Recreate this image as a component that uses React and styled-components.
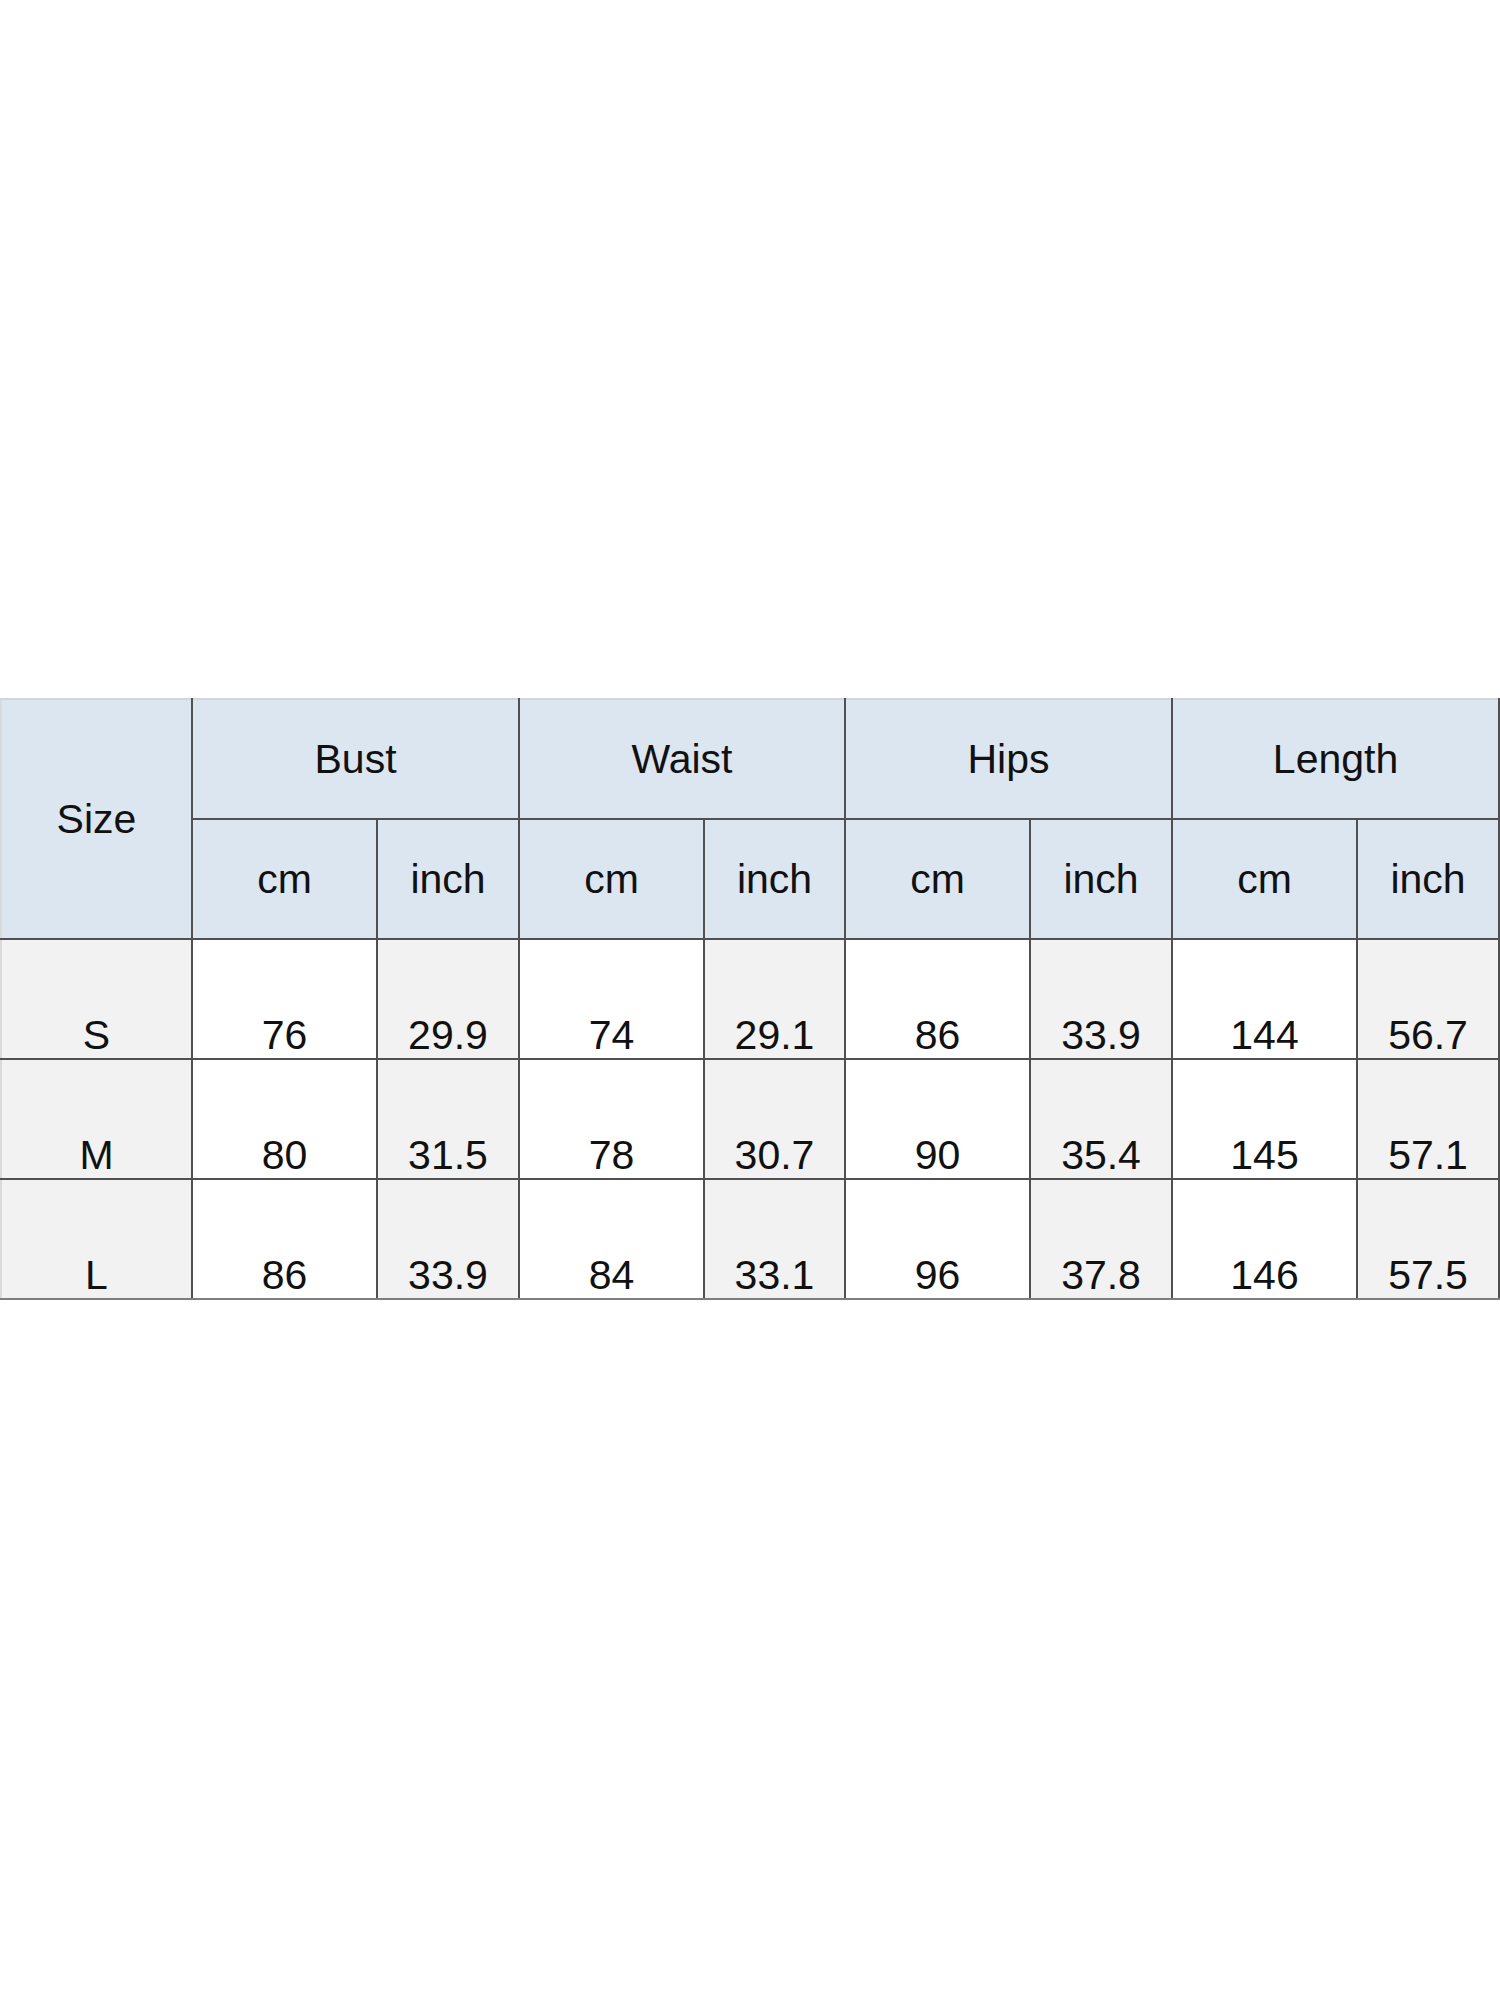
import React from "react";
import styled, { createGlobalStyle } from "styled-components";

const GlobalStyle = createGlobalStyle`
  html, body {
    margin: 0;
    padding: 0;
    background: #ffffff;
  }
  body {
    font-family: "Liberation Sans", Arial, sans-serif;
  }
`;

const Page = styled.div`
  width: 1500px;
  height: 2000px;
  padding-top: 698px;
  box-sizing: border-box;
  background: #ffffff;
`;

const Table = styled.table`
  width: 1498px;
  table-layout: fixed;
  border-collapse: collapse;
  border-top: 2px solid #d2d6da;
  border-left: 2px solid #d8dadc;
  border-right: 2px solid #5a5a5a;
  border-bottom: 2px solid #7e7e7e;
  font-family: "Liberation Sans", Arial, sans-serif;
  font-size: 41px;
  color: #111111;
`;

const HeadRow = styled.tr`
  &:first-child > th {
    border-top: 2px solid #d2d6da;
  }
`;

const HeadCell = styled.th`
  height: 118px;
  padding: 0;
  background: #dce6f1;
  border: 2px solid #505050;
  font-weight: normal;
  text-align: center;
  vertical-align: middle;
  &:first-child {
    border-left-color: #d8dadc;
  }
`;

const BodyRow = styled.tr`
  &:last-child > td {
    border-bottom: 2px solid #7e7e7e;
  }
`;

const Cell = styled.td`
  height: 118px;
  padding: 0;
  background: ${(p) => (p.$shaded ? "#f2f2f2" : "#ffffff")};
  border: 2px solid #505050;
  text-align: center;
  vertical-align: bottom;
  line-height: 46px;
  &:first-child {
    border-left-color: #d8dadc;
  }
`;

const GROUPS = ["Bust", "Waist", "Hips", "Length"];

const ROWS = [
  ["S", 76, "29.9", 74, "29.1", 86, "33.9", 144, "56.7"],
  ["M", 80, "31.5", 78, "30.7", 90, "35.4", 145, "57.1"],
  ["L", 86, "33.9", 84, "33.1", 96, "37.8", 146, "57.5"],
];

const WIDTHS = [191, 185, 142, 185, 141, 185, 142, 185, 142];

const App = () => {
  return (
    <>
      <GlobalStyle />
      <Page>
        <Table>
          <colgroup>
            {WIDTHS.map((w, i) => (
              <col key={i} style={{ width: w }} />
            ))}
          </colgroup>
          <thead>
            <HeadRow>
              <HeadCell rowSpan={2}>Size</HeadCell>
              {GROUPS.map((g) => (
                <HeadCell key={g} colSpan={2}>
                  {g}
                </HeadCell>
              ))}
            </HeadRow>
            <HeadRow>
              {GROUPS.map((g) => (
                <React.Fragment key={g}>
                  <HeadCell>cm</HeadCell>
                  <HeadCell>inch</HeadCell>
                </React.Fragment>
              ))}
            </HeadRow>
          </thead>
          <tbody>
            {ROWS.map((row) => (
              <BodyRow key={row[0]}>
                {row.map((v, i) => (
                  <Cell key={i} $shaded={i % 2 === 0}>
                    {v}
                  </Cell>
                ))}
              </BodyRow>
            ))}
          </tbody>
        </Table>
      </Page>
    </>
  );
};

export default App;
